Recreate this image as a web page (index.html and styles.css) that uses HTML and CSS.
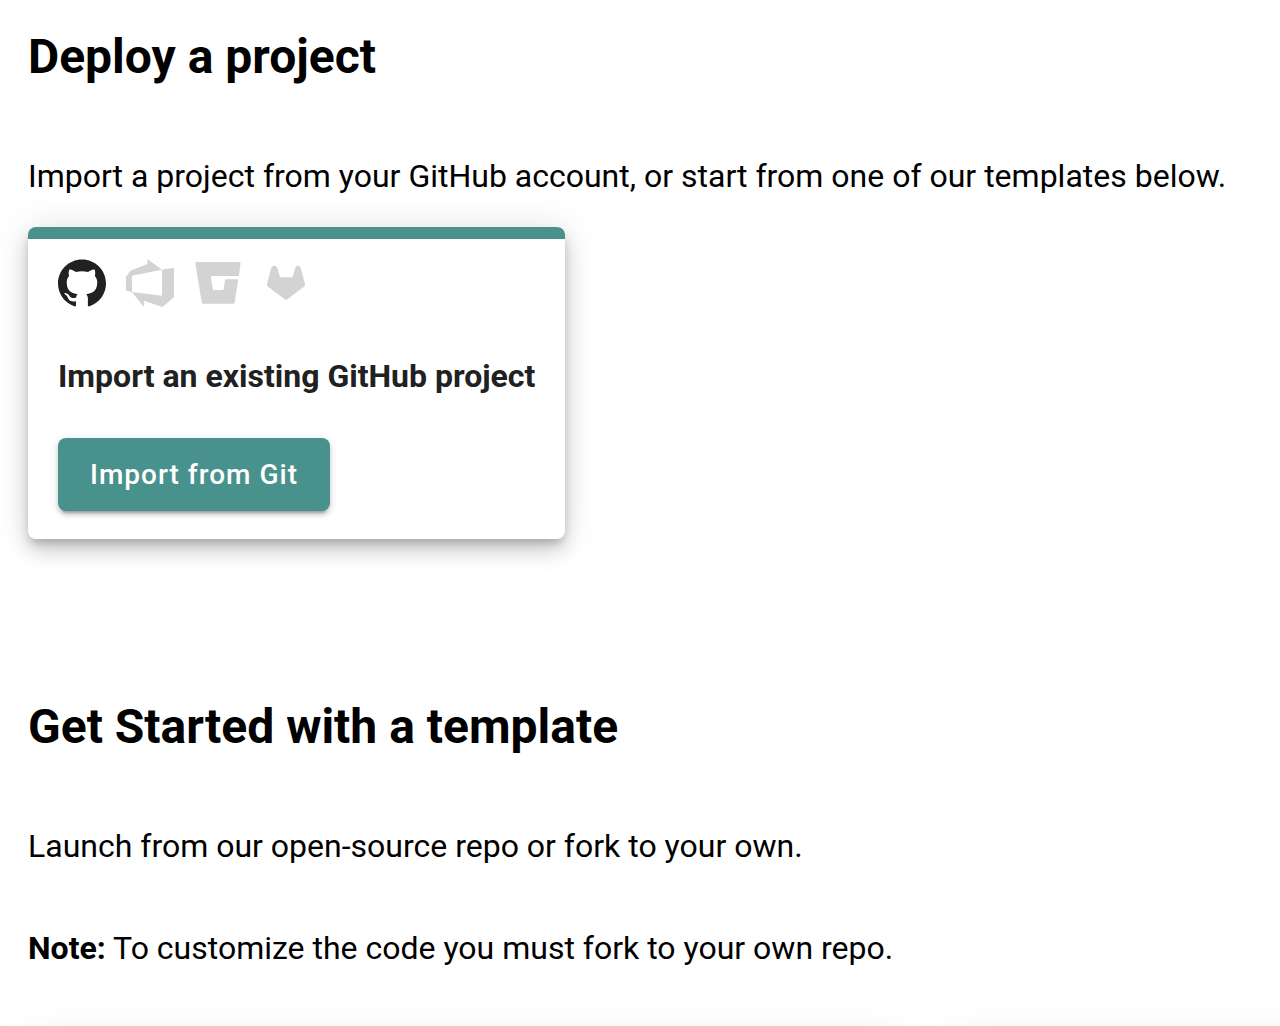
FILE: index.html
```html
<!DOCTYPE html>
<html lang="en">
<head>
<meta charset="utf-8">
<meta name="viewport" content="width=device-width, initial-scale=1">
<title>Deploy a project</title>
<link rel="stylesheet" href="styles.css">
</head>
<body>
<main class="page">
  <section class="section">
    <h1 class="title">Deploy a project</h1>
    <p class="text">Import a project from your GitHub account, or start from one of our templates below.</p>
    <article class="card">
      <div class="providers">
        <svg class="icon icon-active" viewBox="0 0 24 24" role="img" aria-label="GitHub"><path d="M12 .297c-6.63 0-12 5.373-12 12 0 5.303 3.438 9.8 8.205 11.385.6.113.82-.258.82-.577 0-.285-.01-1.04-.015-2.04-3.338.724-4.042-1.61-4.042-1.61C4.422 18.07 3.633 17.7 3.633 17.7c-1.087-.744.084-.729.084-.729 1.205.084 1.838 1.236 1.838 1.236 1.07 1.835 2.809 1.305 3.495.998.108-.776.417-1.305.76-1.605-2.665-.3-5.466-1.332-5.466-5.93 0-1.31.465-2.38 1.235-3.22-.135-.303-.54-1.523.105-3.176 0 0 1.005-.322 3.3 1.23.96-.267 1.98-.399 3-.405 1.02.006 2.04.138 3 .405 2.28-1.552 3.285-1.23 3.285-1.23.645 1.653.24 2.873.12 3.176.765.84 1.23 1.91 1.23 3.22 0 4.61-2.805 5.625-5.475 5.92.42.36.81 1.096.81 2.22 0 1.606-.015 2.896-.015 3.286 0 .315.21.69.825.57C20.565 22.092 24 17.592 24 12.297c0-6.627-5.373-12-12-12"/></svg>
        <svg class="icon" viewBox="0 0 24 24" role="img" aria-label="Azure DevOps"><path d="M0 8.877L2.247 5.91l8.405-3.416V.022l7.37 5.393L2.966 8.338v8.225L0 15.707zm24-4.45v14.651l-5.753 4.9-9.303-3.057v3.056l-5.978-7.416 15.057 1.798V5.415z"/></svg>
        <svg class="icon" viewBox="0 0 48 48" role="img" aria-label="Bitbucket"><path d="M2.800 3H45.300Q46.900 3 46.600 4.500L44.800 17H16.700L19 31H29.500L31.200 20.200H44.200L40.700 43.500Q40.500 44.800 39.200 44.800H9.300Q8 44.800 7.800 43.500L1.400 4.500Q1.200 3 2.800 3Z"/></svg>
        <svg class="icon" viewBox="0 0 48 48" role="img" aria-label="GitLab"><path d="M5 25L9.200 9Q10.200 6.700 12.400 6.700T15.300 9L18 18.200H30.500L33.300 9Q34 6.700 36 6.700T38.700 9L43 25Q43.300 26.600 42.200 27.500L25 40.400Q24 41.200 23 40.400L5.800 27.500Q4.700 26.600 5 25Z"/></svg>
      </div>
      <h2 class="card-title">Import an existing GitHub project</h2>
      <button class="button" type="button">Import from Git</button>
    </article>
  </section>
  <section class="section">
    <h1 class="title">Get Started with a template</h1>
    <p class="text">Launch from our open-source repo or fork to your own.</p>
    <p class="text note"><strong>Note:</strong> To customize the code you must fork to your own repo.</p>
    <div class="templates">
      <article class="template"></article>
      <article class="template"></article>
    </div>
  </section>
</main>
</body>
</html>
```
FILE: styles.css
```css
* {
  box-sizing: border-box;
}

body {
  margin: 0;
  background: #fff;
  color: #000;
  font-family: Roboto, "Liberation Sans", sans-serif;
}

.page {
  display: flex;
  flex-direction: column;
  gap: 160px;
  height: 100vh;
  padding: 29px 28px 0;
  overflow: hidden;
}

.section {
  flex: none;
}

.title {
  margin: 0 0 72px;
  font-size: 48px;
  line-height: 56px;
  font-weight: 700;
}

.text {
  margin: 0;
  font-size: 32px;
  line-height: 38px;
}

.note {
  margin-top: 64px;
}

.card,
.template {
  border-radius: 8px;
  background: #fff;
  box-shadow:
    0 6px 10px -2px rgba(0, 0, 0, 0.2),
    0 12px 20px 0 rgba(0, 0, 0, 0.14),
    0 2px 36px 0 rgba(0, 0, 0, 0.12);
}

.card {
  width: fit-content;
  margin-top: 32px;
  padding: 20px 30px 28px;
  border-top: 12px solid #48918d;
  color: #212121;
}

.providers {
  display: flex;
  gap: 20px;
}

.icon {
  width: 48px;
  height: 48px;
  fill: #d3d3d3;
}

.icon-active {
  fill: #212121;
}

.card-title {
  margin: 50px 0 43px;
  font-size: 32px;
  line-height: 38px;
  font-weight: 700;
}

.button {
  display: block;
  height: 73px;
  padding: 0 32px;
  border: 0;
  border-radius: 8px;
  background: #48918d;
  color: #fff;
  font: 500 28px/40px Roboto, "Liberation Sans", sans-serif;
  letter-spacing: 1px;
  cursor: pointer;
  box-shadow:
    0 6px 2px -4px rgba(0, 0, 0, 0.2),
    0 4px 4px 0 rgba(0, 0, 0, 0.14),
    0 2px 10px 0 rgba(0, 0, 0, 0.12);
}

.templates {
  display: flex;
  gap: 48px;
  margin-top: 72px;
}

.template {
  flex: none;
  width: 874px;
  max-width: 100%;
  min-height: 320px;
}
```
